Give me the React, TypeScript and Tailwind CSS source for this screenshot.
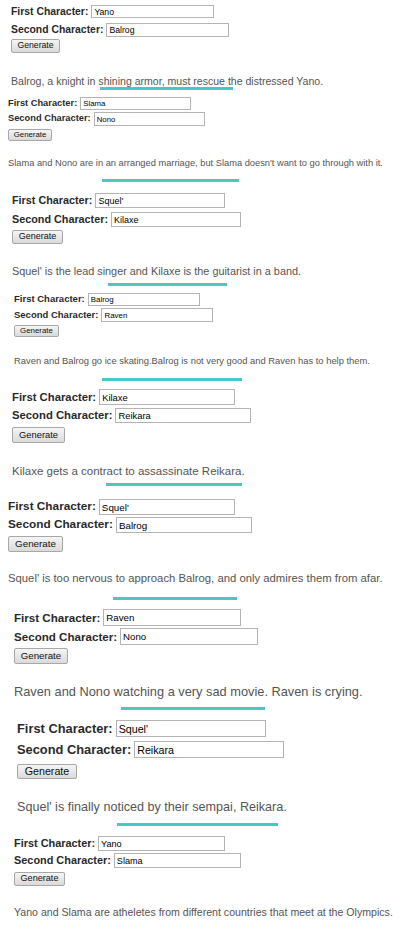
import { FC } from "react";

interface IStory {
  first: string;
  second: string;
  text: string;
  wrap: string;
  label: string;
  row1: string;
  row2: string;
  input: string;
  btn: string;
  sentence: string;
  line?: string;
}

// every screenshot in the collage has its own scale, so sizes are per story
const stories: IStory[] = [
  {
    first: "Yano",
    second: "Balrog",
    text: "Balrog, a knight in shining armor, must rescue the distressed Yano.",
    wrap: "pl-[11px] pt-[5px]",
    label: "text-[10.4px]",
    row1: "h-[13px]",
    row2: "mt-[5px] h-[14px]",
    input: "w-[123px] text-[8.7px]",
    btn: "mt-[2px] h-[14px] w-[49px] text-[8.7px]",
    sentence: "mt-[22px] text-[10.55px] leading-[12px]",
    line: "ml-[100px] w-[133px] mt-0",
  },
  {
    first: "Slama",
    second: "Nono",
    text: "Slama and Nono are in an arranged marriage, but Slama doesn't want to go through with it.",
    wrap: "pl-[8px] pt-[7px]",
    label: "text-[9.3px]",
    row1: "h-[13px]",
    row2: "mt-[2px] h-[14px]",
    input: "w-[111px] text-[7.8px]",
    btn: "mt-[3px] h-[12px] w-[44px] text-[7.8px]",
    sentence: "mt-[17px] text-[9.3px] leading-[11px]",
    line: "ml-[102px] w-[137px] mt-[10px]",
  },
  {
    first: "Squel'",
    second: "Kilaxe",
    text: "Squel' is the lead singer and Kilaxe is the guitarist in a band.",
    wrap: "pl-[12px] pt-[11px]",
    label: "text-[10.8px]",
    row1: "h-[15px]",
    row2: "mt-[4px] h-[15px]",
    input: "w-[130px] text-[9px]",
    btn: "mt-[3px] h-[14px] w-[51px] text-[9px]",
    sentence: "mt-[21px] text-[10.85px] leading-[12px]",
    line: "ml-[108px] w-[119px] mt-[6px]",
  },
  {
    first: "Balrog",
    second: "Raven",
    text: "Raven and Balrog go ice skating.Balrog is not very good and Raven has to help them.",
    wrap: "pl-[14px] pt-[7px]",
    label: "text-[9.5px]",
    row1: "h-[13px]",
    row2: "mt-[2px] h-[14px]",
    input: "w-[112px] text-[7.9px]",
    btn: "mt-[3px] h-[12px] w-[45px] text-[7.9px]",
    sentence: "mt-[18px] text-[9.4px] leading-[11px]",
    line: "ml-[102px] w-[140px] mt-[12px]",
  },
  {
    first: "Kilaxe",
    second: "Reikara",
    text: "Kilaxe gets a contract to assassinate Reikara.",
    wrap: "pl-[12px] pt-[8px]",
    label: "text-[11.3px]",
    row1: "h-[16px]",
    row2: "mt-[3px] h-[15px]",
    input: "w-[136px] text-[9.4px]",
    btn: "mt-[4px] h-[16px] w-[53px] text-[9.4px]",
    sentence: "mt-[22px] text-[11.5px] leading-[13px]",
    line: "ml-[106px] w-[136px] mt-[5px]",
  },
  {
    first: "Squel'",
    second: "Balrog",
    text: "Squel' is too nervous to approach Balrog, and only admires them from afar.",
    wrap: "pl-[8px] pt-[13px]",
    label: "text-[11.8px]",
    row1: "h-[16px]",
    row2: "mt-[2px] h-[16px]",
    input: "w-[136px] text-[9.8px]",
    btn: "mt-[3px] h-[16px] w-[55px] text-[9.8px]",
    sentence: "mt-[20px] text-[11.3px] leading-[13px]",
    line: "ml-[113px] w-[124px] mt-[12px]",
  },
  {
    first: "Raven",
    second: "Nono",
    text: "Raven and Nono watching a very sad movie. Raven is crying.",
    wrap: "pl-[14px] pt-[9px]",
    label: "text-[11.6px]",
    row1: "h-[17px]",
    row2: "mt-[2px] h-[17px]",
    input: "w-[138px] text-[9.7px]",
    btn: "mt-[3px] h-[16px] w-[54px] text-[9.7px]",
    sentence: "mt-[20px] text-[12.8px] leading-[15px]",
    line: "ml-[121px] w-[144px] mt-[8px]",
  },
  {
    first: "Squel'",
    second: "Reikara",
    text: "Squel' is finally noticed by their sempai, Reikara.",
    wrap: "pl-[17px] pt-[10px]",
    label: "text-[12.85px]",
    row1: "h-[17px]",
    row2: "mt-[4px] h-[17px]",
    input: "w-[150px] text-[10.7px]",
    btn: "mt-[6px] h-[15px] w-[60px] text-[10.7px]",
    sentence: "mt-[21px] text-[12.6px] leading-[15px]",
    line: "ml-[117px] w-[161px] mt-[8px]",
  },
  {
    first: "Yano",
    second: "Slama",
    text: "Yano and Slama are atheletes from different countries that meet at the Olympics.",
    wrap: "pl-[14px] pt-[10px]",
    label: "text-[10.9px]",
    row1: "h-[15px]",
    row2: "mt-[2px] h-[15px]",
    input: "w-[127px] text-[9.1px]",
    btn: "mt-[4px] h-[14px] w-[51px] text-[9.1px]",
    sentence: "mt-[20px] text-[10.6px] leading-[12px]",
  },
];

const Story: FC<{ story: IStory }> = ({ story }) => {
  const inputCls = `h-full border border-[#b4b4b4] bg-white px-[2px] text-black outline-none ${story.input}`;

  return (
    <div>
      <div className={story.wrap}>
        <div className={`flex items-center gap-[3px] ${story.row1}`}>
          <span className={`font-bold text-[#2a2a2a] ${story.label}`}>First Character:</span>
          <input className={inputCls} defaultValue={story.first} readOnly />
        </div>
        <div className={`flex items-center gap-[3px] ${story.row2}`}>
          <span className={`font-bold text-[#2a2a2a] ${story.label}`}>Second Character:</span>
          <input className={inputCls} defaultValue={story.second} readOnly />
        </div>
        <button
          className={`flex items-center justify-center rounded-[2px] border border-[#a8a8a8] bg-linear-to-b from-[#f5f5f5] to-[#dadada] text-[#111] ${story.btn}`}
        >
          Generate
        </button>
        <p className={`whitespace-nowrap text-[#555] ${story.sentence}`}>{story.text}</p>
      </div>
      {story.line && <div className={`h-[3px] bg-[#46c8c5] ${story.line}`} />}
    </div>
  );
};

const App: FC = () => {
  return (
    <div className="w-[400px] min-h-[934px] bg-white font-['Liberation_Sans',Arial,sans-serif]">
      {stories.map((s, i) => (
        <Story key={i} story={s} />
      ))}
    </div>
  );
};

export default App;
